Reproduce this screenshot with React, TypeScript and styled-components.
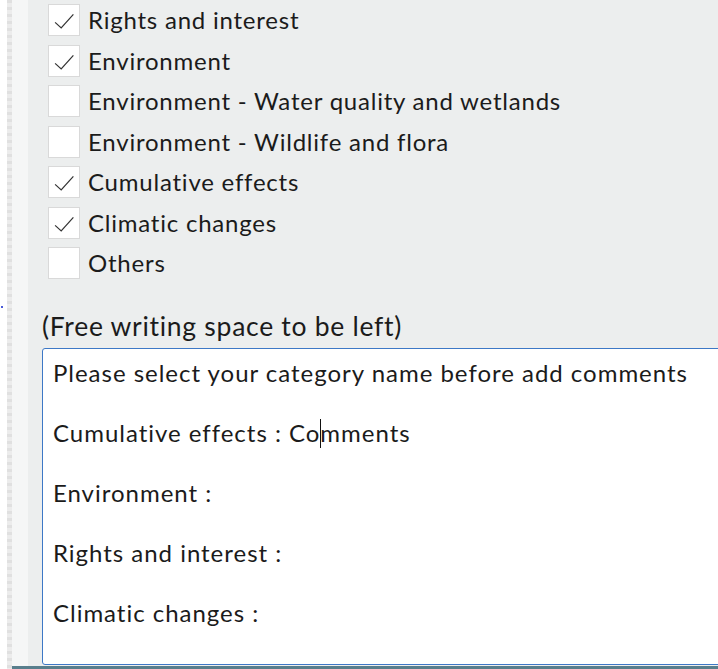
import React from "react";
import styled, { createGlobalStyle } from "styled-components";

const Global = createGlobalStyle`
  html, body { margin: 0; padding: 0; background: #ffffff; overflow: hidden; }
  body { font-family: "Lato", "Noto Sans", sans-serif; color: #1b1b1b; }
`;

const Page = styled.div`
  display: flex;
  width: 718px;
  height: 669px;
  overflow: hidden;
`;

const Gutter = styled.div`
  width: 7px;
  flex: none;
  background: #ffffff;
  display: flex;
  flex-direction: column;
  padding-top: 306px;
  box-sizing: border-box;
`;

const Dot = styled.span`
  display: block;
  width: 2px;
  height: 2px;
  margin-left: 1px;
  background: #4a5ad8;
`;

const Stripe = styled.div`
  width: 5px;
  flex: none;
  background: repeating-linear-gradient(
    to bottom,
    #e0e0e0 0px,
    #e0e0e0 3px,
    #ececec 3px,
    #ececec 7px
  );
`;

const Column = styled.div`
  flex: 1;
  display: flex;
  flex-direction: column;
  min-width: 0;
`;

const ContentRow = styled.div`
  flex: 1;
  display: flex;
  min-height: 0;
`;

const LightStrip = styled.div`
  width: 16px;
  flex: none;
  background: #f5f6f6;
`;

const Panel = styled.div`
  flex: 1;
  background: #eceeee;
  padding-left: 14px;
  display: flex;
  flex-direction: column;
  min-width: 0;
  overflow: hidden;
`;

const List = styled.div`
  display: flex;
  flex-direction: column;
  padding-left: 6px;
`;

const Row = styled.label`
  display: flex;
  align-items: center;
  height: 40.5px;
  gap: 8px;
  font-size: 24px;
  line-height: 30px;
  letter-spacing: 0.78px;
  white-space: nowrap;
`;

const Box = styled.span`
  width: 32px;
  height: 32px;
  flex: none;
  box-sizing: border-box;
  background: #ffffff;
  border: 1px solid #d9d9d9;
  display: flex;
  align-items: center;
  justify-content: center;
`;

const Label = styled.div`
  margin-top: 27px;
  font-size: 26.5px;
  line-height: 30px;
  letter-spacing: 0.72px;
  white-space: nowrap;
`;

const TextBox = styled.div`
  margin-top: 7px;
  width: 700px;
  height: 317px;
  flex: none;
  box-sizing: border-box;
  background: #ffffff;
  border: 1px solid #3d78c6;
  border-radius: 3px;
  padding: 9px 10px;
  font-size: 24px;
  line-height: 30px;
  letter-spacing: 0.98px;
  white-space: nowrap;
`;

const Para = styled.div`
  margin-bottom: 30px;
`;

const Caret = styled.span`
  display: inline-block;
  width: 1px;
  height: 29px;
  margin: 0 -0.5px;
  background: #111111;
  vertical-align: -6px;
`;

const BottomBar = styled.div`
  height: 3px;
  flex: none;
  background: #587e8c;
`;

const Check = () => (
  <svg width="32" height="32" viewBox="0 0 32 32" fill="none">
    <path d="M6.5 18.5 L13 24.5 L26 10" stroke="#333333" strokeWidth="1.3" />
  </svg>
);

const items: { text: string; checked: boolean }[] = [
  { text: "Rights and interest", checked: true },
  { text: "Environment", checked: true },
  { text: "Environment - Water quality and wetlands", checked: false },
  { text: "Environment - Wildlife and flora", checked: false },
  { text: "Cumulative effects", checked: true },
  { text: "Climatic changes", checked: true },
  { text: "Others", checked: false },
];

export default function App() {
  return (
    <>
      <Global />
      <Page>
        <Gutter>
          <Dot />
        </Gutter>
        <Stripe />
        <Column>
          <ContentRow>
            <LightStrip />
            <Panel>
              <List>
                {items.map((it) => (
                  <Row key={it.text}>
                    <Box>{it.checked && <Check />}</Box>
                    {it.text}
                  </Row>
                ))}
              </List>
              <Label>(Free writing space to be left)</Label>
              <TextBox>
                <Para>Please select your category name before add comments</Para>
                <Para>
                  Cumulative effects : Co<Caret />mments
                </Para>
                <Para>Environment :</Para>
                <Para>Rights and interest :</Para>
                <Para>Climatic changes :</Para>
              </TextBox>
            </Panel>
          </ContentRow>
          <BottomBar />
        </Column>
      </Page>
    </>
  );
}
